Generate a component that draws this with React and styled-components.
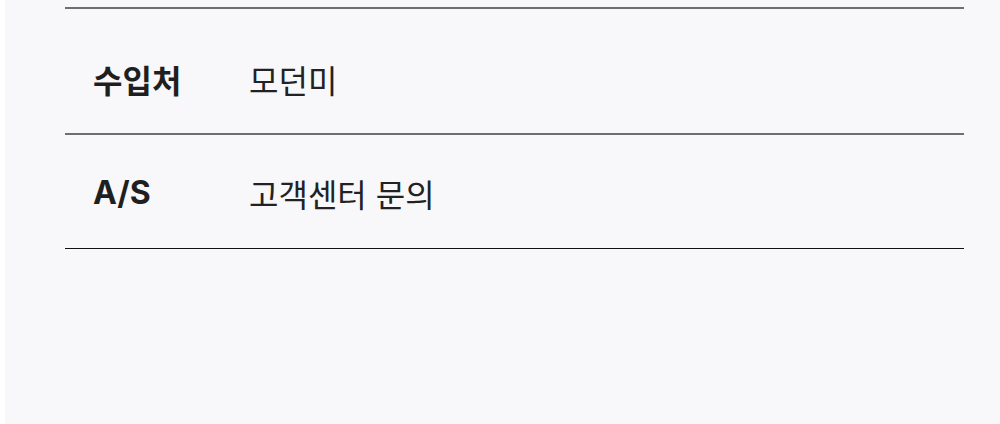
import React from "react";
import styled, { createGlobalStyle } from "styled-components";

const Global = createGlobalStyle`
  html, body { margin: 0; padding: 0; background: #ffffff; }
  body { font-family: Inter, "Noto Sans CJK KR", sans-serif; }
`;

const Panel = styled.section`
  margin-left: 5px;
  height: 424px;
  background: #f8f8fa;
  padding: 7px 36px 0 60px;
  box-sizing: border-box;
`;

const Table = styled.div`
  display: flex;
  flex-direction: column;
  border-top: 2px solid #6f6f6f;
`;

const Row = styled.div`
  display: flex;
  align-items: center;
  box-sizing: border-box;
  height: ${(p) => p.$h}px;
  padding-top: ${(p) => p.$pt || 0}px;
  border-bottom: ${(p) => (p.$last ? "1px solid #111" : "2px solid #6f6f6f")};
`;

const Label = styled.div`
  width: 156px;
  padding-left: 28px;
  font-size: 32px;
  font-weight: 700;
  color: #1f1f1f;
  font-family: Inter, "Noto Sans CJK KR", sans-serif;
`;

const Value = styled.div`
  font-size: 32px;
  font-weight: 400;
  color: #222;
  font-family: Inter, "Noto Sans CJK KR", sans-serif;
`;

export default function App() {
  return (
    <>
      <Global />
      <Panel>
        <Table>
          <Row $h={126} $pt={16}>
            <Label>수입처</Label>
            <Value>모던미</Value>
          </Row>
          <Row $h={114} $pt={2} $last>
            <Label>A/S</Label>
            <Value>고객센터 문의</Value>
          </Row>
        </Table>
      </Panel>
    </>
  );
}
